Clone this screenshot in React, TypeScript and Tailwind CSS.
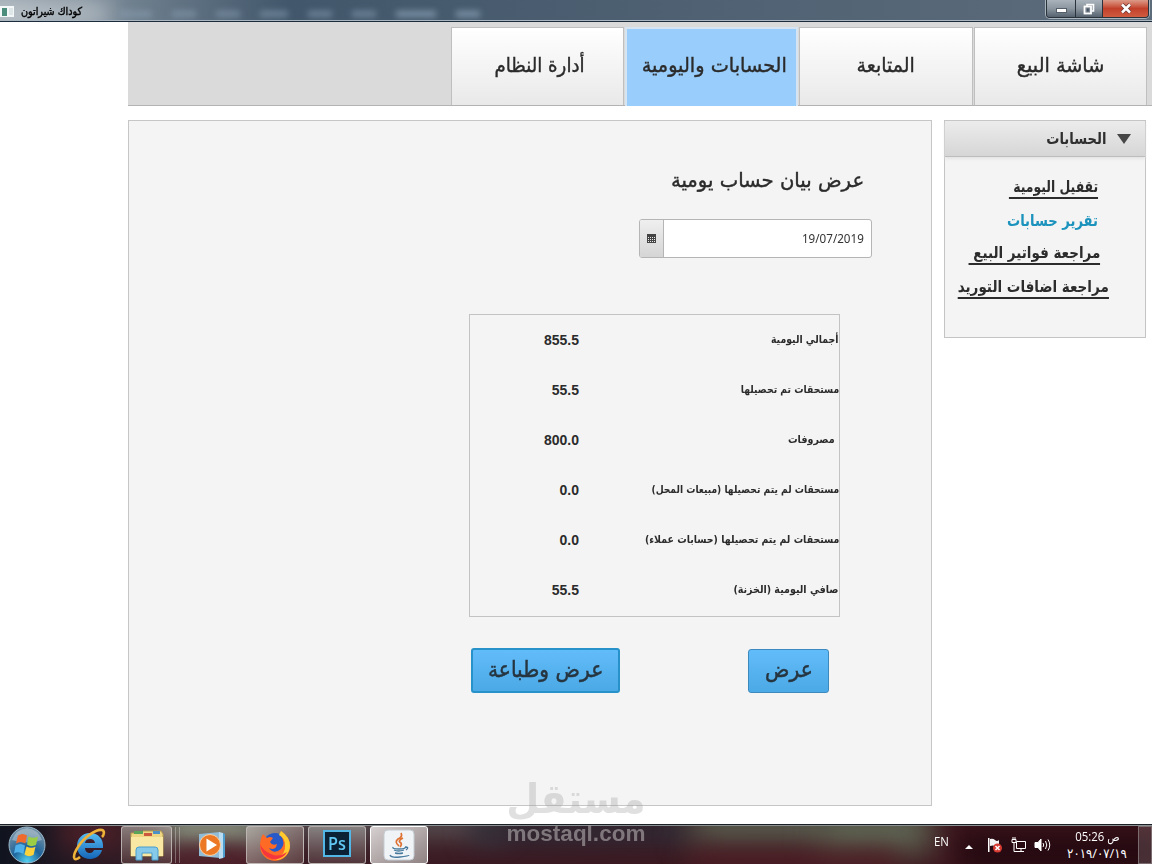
import { ReactNode } from 'react';

interface Tab {
  label: string;
  active?: boolean;
  scale: string;
}

interface Row {
  label: string;
  value: string;
  scale: string;
}

const tabs: Tab[] = [
  { label: 'شاشة البيع', scale: 'scale-x-[0.96]' },
  { label: 'المتابعة', scale: 'scale-x-[0.95]' },
  { label: 'الحسابات واليومية', scale: 'ml-[5px] scale-x-[0.965]', active: true },
  { label: 'أدارة النظام', scale: 'ml-[4px] scale-x-[0.91]' },
];

const rows: Row[] = [
  { label: 'أجمالي اليومية', value: '855.5', scale: 'scale-x-[0.85]' },
  { label: 'مستحقات تم تحصيلها', value: '55.5', scale: 'scale-x-[0.84]' },
  { label: 'مصروفات', value: '800.0', scale: 'scale-x-[0.87] mr-1' },
  { label: 'مستحقات لم يتم تحصيلها (مبيعات المحل)', value: '0.0', scale: 'scale-x-[0.83]' },
  { label: 'مستحقات لم يتم تحصيلها (حسابات عملاء)', value: '0.0', scale: 'scale-x-[0.855]' },
  { label: 'صافي اليومية (الخزنة)', value: '55.5', scale: 'scale-x-[0.865]' },
];

function TitleBar() {
  return (
    <div
      dir="ltr"
      className="relative flex h-[22px] shrink-0 items-start justify-between overflow-hidden border-b border-[#1d2c3c] bg-linear-to-r from-[#98a4ad] via-[#42576b] via-25% to-[#5d6c7b]"
    >
      <div className="absolute -left-4 top-1 h-5 w-32 rounded-full bg-white/50 blur-md" />
      <div className="absolute left-[120px] top-[11px] flex gap-5 blur-[3px]">
        <div className="h-1.5 w-8 bg-[#8aa0b4]/60" />
        <div className="h-1.5 w-6 bg-[#8aa0b4]/60" />
        <div className="h-1.5 w-6 bg-[#8aa0b4]/60" />
        <div className="h-1.5 w-7 bg-[#8aa0b4]/60" />
        <div className="h-1.5 w-6 bg-[#8aa0b4]/60" />
        <div className="h-1.5 w-6 bg-[#8aa0b4]/60" />
        <div className="h-1.5 w-10 bg-[#8aa0b4]/80" />
        <div className="h-1.5 w-6 bg-[#8aa0b4]/80" />
      </div>
      <div className="absolute inset-x-0 bottom-0 h-px bg-[#a9b5bf]" />
      <div className="relative flex items-center pt-[4px]">
        <svg width="15" height="13" viewBox="0 0 15 13">
          <rect x="0" y="1" width="14" height="11" fill="#f4f7f7" />
          <rect x="2" y="3" width="5" height="8" fill="#4c8c7c" />
          <rect x="9" y="3" width="4" height="7" fill="#dfe6e8" />
        </svg>
        <span className="ml-1.5 mt-px origin-left scale-x-[0.97] whitespace-nowrap font-['DejaVu_Sans_Condensed','DejaVu_Sans',sans-serif] text-[11px] leading-[14px] text-black [-webkit-text-stroke:0.4px_black]">
          كوداك شيراتون
        </span>
      </div>
      <div className="relative mr-[3px] flex h-[18px] overflow-hidden rounded-b border border-t-0 border-[#2a333c] shadow-[0_0_0_1px_#aab4bd]">
        <div className="flex w-[29px] items-center justify-center border-r border-[#2a333c] bg-linear-to-b from-[#aab3bb] via-[#8b96a0] to-[#56636f]">
          <div className="mt-1 h-[5px] w-[11px] border border-[#555f69] bg-white" />
        </div>
        <div className="flex w-[27px] items-center justify-center border-r border-[#2a333c] bg-linear-to-b from-[#aab3bb] via-[#8b96a0] to-[#56636f]">
          <svg width="12" height="12" viewBox="0 0 12 12" fill="none">
            <path d="M4 3V1.500H10.500V8H9" stroke="#fff" strokeWidth="1.600" />
            <rect x="1.500" y="3.500" width="6.500" height="7" fill="#7d8994" stroke="#fff" strokeWidth="1.800" />
            <rect x="3.800" y="5.500" width="2" height="3" fill="#46525e" />
          </svg>
        </div>
        <div className="flex w-[45px] items-center justify-center bg-linear-to-b from-[#dc9a88] via-[#c2402a] to-[#cf5b3f]">
          <svg width="12" height="11" viewBox="0 0 12 11">
            <path d="M2 1.500L10 9.500M10 1.500L2 9.500" stroke="#6c3a35" strokeWidth="4" />
            <path d="M2 1.500L10 9.500M10 1.500L2 9.500" stroke="#fff" strokeWidth="2.500" />
          </svg>
        </div>
      </div>
    </div>
  );
}

function Tabs() {
  return (
    <div className="ml-32 flex h-[84px] shrink-0 border-b border-[#b3b3b3] bg-[#dadada] pr-[5px] pt-[5px]">
      {tabs.map((tab) => (
        <div
          key={tab.label}
          className={`ml-[1px] flex w-[173.3px] shrink-0 justify-center border border-b-0 text-[#2b2b2b] ${
            tab.active
              ? 'h-[79px] border-2 border-b-0 border-[#d5e4f0] bg-[#99cdfb] pt-[20px]'
              : 'h-[78px] border-[#bfbfbf] bg-linear-to-b from-white to-[#e9e9e9] pt-[21px]'
          }`}
        >
          <span
            className={`whitespace-nowrap text-[20px] leading-8 [-webkit-text-stroke:0.4px_#2b2b2b] ${tab.scale}`}
          >
            {tab.label}
          </span>
        </div>
      ))}
    </div>
  );
}

function SideLink({ children, className = '' }: { children: ReactNode; className?: string }) {
  return (
    <div className={`w-fit origin-right whitespace-pre text-[16px] font-bold leading-5 ${className}`}>{children}</div>
  );
}

function Sidebar() {
  return (
    <div className="h-[218px] w-[202px] shrink-0 border border-[#c4c4c4] bg-[#f4f4f4]">
      <div className="flex h-9 items-center border-b border-[#bdbdbd] bg-linear-to-b from-[#ececec] to-[#d6d6d6] pr-[14px] shadow-[0_2px_3px_#e4e4e4]">
        <svg width="14" height="10" viewBox="0 0 14 10">
          <path d="M0 0H14L7 10Z" fill="#474747" />
        </svg>
        <span className="mr-[11px] origin-right scale-x-[0.82] text-[16px] font-bold text-[#2f2f2f]">الحسابات</span>
      </div>
      <div className="text-[#2c2c2c]">
        <SideLink className="mr-[47px] mt-5 scale-x-[0.775] border-b-2 border-[#2c2c2c]">{'تقفيل اليومية '}</SideLink>
        <SideLink className="mr-[47px] mt-3 scale-x-[0.82] text-[#1c93bd]">تقرير حسابات</SideLink>
        <SideLink className="mr-[45px] mt-3 scale-x-[0.843] border-b-2 border-[#2c2c2c]">
          {'مراجعة فواتير البيع '}
        </SideLink>
        <SideLink className="mr-[36px] mt-3 scale-x-[0.845] border-b-2 border-[#2c2c2c]">مراجعة اضافات التوريد</SideLink>
      </div>
    </div>
  );
}

function DateField() {
  return (
    <div dir="ltr" className="flex h-[39px] w-[233px] overflow-hidden rounded-[3px] border border-[#b5b5b5] bg-white">
      <div className="flex w-6 items-center justify-center border-r border-[#b5b5b5] bg-linear-to-b from-[#efefef] to-[#d5d5d5]">
        <svg width="9" height="9" viewBox="0 0 9 9">
          <path d="M0 0H9V9H0Z" fill="#444" />
          <path d="M1 3h1v1H1zM3 3h1v1H3zM5 3h1v1H5zM7 3h1v1H7zM1 5h1v1H1zM3 5h1v1H3zM5 5h1v1H5zM7 5h1v1H7zM1 7h1v1H1zM3 7h1v1H3zM5 7h1v1H5zM7 7h1v1H7z" fill="#e8e8e8" />
        </svg>
      </div>
      <div className="flex flex-1 items-center justify-end pr-[7px] font-['Noto_Sans',sans-serif] text-[12px] text-[#333]">
        <span className="origin-right scale-x-[0.97]">19/07/2019</span>
      </div>
    </div>
  );
}

function Summary() {
  return (
    <div className="flex h-[303px] w-[371px] flex-col border border-[#c3c3c3] text-[#2b2b2b]">
      {rows.map((row) => (
        <div key={row.label} className="flex h-[50px] shrink-0 items-center">
          <div className="flex w-[260px] pt-px">
            <span className={`origin-right whitespace-nowrap text-[11px] font-bold ${row.scale}`}>{row.label}</span>
          </div>
          <span dir="ltr" className="font-['Liberation_Sans',sans-serif] text-[14px] font-bold">
            {row.value}
          </span>
        </div>
      ))}
    </div>
  );
}

function TaskButton({ children, className = '' }: { children: ReactNode; className?: string }) {
  return (
    <div
      className={`flex h-[38px] items-center justify-center rounded-[3px] border border-[#c9c4c2]/80 ${className}`}
    >
      {children}
    </div>
  );
}

function TaskbarGlass() {
  return (
    <div className="absolute inset-0 overflow-hidden bg-linear-to-r from-[#10141f] via-[#3a1d26] via-15% to-[#3d131b]">
      <div className="absolute -top-2 left-[60px] h-8 w-16 bg-[#4d2028] blur-md" />
      <div className="absolute -top-3 left-[165px] h-8 w-28 bg-[#8f9c88] blur-md" />
      <div className="absolute -bottom-2 left-[170px] h-6 w-24 bg-[#54202a] blur-md" />
      <div className="absolute -top-3 left-[250px] h-6 w-64 bg-[#595557] blur-md" />
      <div className="absolute -top-2 left-[470px] h-7 w-56 bg-[#2f2a35] blur-md" />
      <div className="absolute -top-5 left-[690px] h-10 w-36 bg-[#5a6152] blur-lg" />
      <div className="absolute -top-4 left-[820px] h-11 w-28 bg-[#616c58] blur-lg" />
      <div className="absolute -bottom-2 left-[690px] h-5 w-52 bg-[#4f1b23] blur-md" />
      <div className="absolute -right-4 top-2 h-10 w-52 bg-[#250a11] blur-md" />
    </div>
  );
}

function Taskbar() {
  return (
    <div
      dir="ltr"
      className="relative h-10 shrink-0 overflow-hidden border-t border-[#1b2026] font-['Open_Sans','DejaVu_Sans_Condensed',sans-serif] text-white"
    >
      <TaskbarGlass />
      <div className="relative flex h-full items-center justify-between border-t border-[#8a9090]">
        <div className="flex items-center">
          <svg className="ml-2" width="38" height="38" viewBox="0 0 38 38">
            <defs>
              <radialGradient id="orb" cx="50%" cy="95%" r="80%">
                <stop offset="0" stopColor="#53d0f0" />
                <stop offset=".5" stopColor="#1d639b" />
                <stop offset="1" stopColor="#6a8ba3" />
              </radialGradient>
            </defs>
            <circle cx="19" cy="19" r="18" fill="url(#orb)" stroke="#9cb9ca" />
            <path d="M4 14Q8 3 19 2Q30 3 34 14Q19 19 4 14Z" fill="#fff" opacity=".3" />
            <path d="M10 9.500Q14.500 6.500 19 9.500L17.300 17.500Q12.500 14.500 8 17.500Z" fill="#ef6a2c" />
            <path d="M20.500 10.500Q25.500 13 30 10.500L28 19Q23 21.500 19 18.500Z" fill="#9cce45" />
            <path d="M7.500 19.500Q12.500 16.500 17 19.500L15.300 28Q10.500 25 6 27.500Z" fill="#4fb1ec" />
            <path d="M18.500 20.500Q23 23 27.500 20.800L25.500 29Q20.500 31.500 16.500 28.500Z" fill="#fbd13c" />
          </svg>
          <svg className="ml-[26px]" width="34" height="34" viewBox="0 0 34 34">
            <defs>
              <linearGradient id="ie" x1="0" y1="0" x2="0" y2="1">
                <stop offset="0" stopColor="#56bdf2" />
                <stop offset="1" stopColor="#1566b8" />
              </linearGradient>
            </defs>
            <path
              fillRule="evenodd"
              d="M18 5C10 5 5 11 5 18C5 26 11 31 18 31C24 31 29 27 30 22H22C21 24 20 25 18 25C15 25 13 23 13 20H31C32 11 26 5 18 5ZM13 15C13.500 12.500 15 11 18 11C21 11 22.500 12.500 23 15Z"
              fill="url(#ie)"
            />
            <path
              d="M8 29C1 35 0 28 6 19C12 9 24 1 30 2C33 3 32 7 30 9"
              fill="none"
              stroke="#eeb238"
              strokeWidth="2.600"
            />
          </svg>
          <TaskButton className="ml-[15px] w-[51px] bg-linear-to-b from-[#aaa49f]/70 to-[#5c3f42]/70">
            <svg width="34" height="32" viewBox="0 0 34 32">
              <path d="M1 4H11L13 2H31L33 5V27H1Z" fill="#eed682" stroke="#b79d50" />
              <path d="M4 2H13V5H4Z" fill="#5da45b" />
              <path d="M14 4H22V7H14Z" fill="#cc573e" />
              <path d="M23 2H30V5H23Z" fill="#4d91c7" />
              <path d="M1 8H33V27H1Z" fill="#f8e8a4" />
              <path d="M6 31V21Q6 18 9 18H25Q28 18 28 21V31H22V24H12V31Z" fill="#86c9e9" stroke="#4a9dcc" />
            </svg>
          </TaskButton>
          <div className="ml-[3px] h-9 w-[5px] border-x border-white/30" />
          <svg className="ml-[18px]" width="28" height="28" viewBox="0 0 28 28">
            <path d="M1 3L22 1V27L1 25Z" fill="#91bcd8" />
            <path d="M21 1L25 2V27L21 28Z" fill="#b9dcf0" />
            <path d="M25 2L27 3V26L25 27Z" fill="#4e9dcf" />
            <circle cx="12" cy="14" r="10.500" fill="#ec7826" stroke="#fbd0a4" />
            <path d="M8.500 7.500L19 14L8.500 20.500Z" fill="#fff" />
          </svg>
          <TaskButton className="ml-5 w-[58px] bg-linear-to-br from-[#b5b0aa]/80 to-[#6b4d4e]/70">
            <svg width="32" height="32" viewBox="0 0 32 32">
              <circle cx="16" cy="16" r="12" fill="#2759c9" />
              <path d="M4 5L8 9Q11 7 14 9L11 13Q13 17 18 15Q17 22 10 19Q15 26 22 20Q27 14 22 7L22 2Q31 8 31 17A15 15 0 0 1 1 17Q1 10 4 5Z" fill="#ff6a25" />
              <path d="M22 2Q31 8 31 17A15 15 0 0 1 17 31Q27 25 26 16Q26 9 20 6Z" fill="#ffcb2e" />
              <path d="M1 15Q2 27 13 30Q24 31 28 23Q20 29 12 25Q4 22 1 15Z" fill="#f5363f" />
            </svg>
          </TaskButton>
          <TaskButton className="ml-1 w-[58px] bg-linear-to-b from-[#9d9a99]/70 to-[#5b4246]/70">
            <div className="mb-1 flex h-[27px] w-7 items-center justify-center border-2 border-[#52b7e6] bg-[#0b2236] font-['Open_Sans',sans-serif] text-[18px] font-semibold leading-none text-[#61c7f3]">
              <span className="scale-x-[0.9]">Ps</span>
            </div>
          </TaskButton>
          <TaskButton className="ml-1 w-[58px] border-white bg-linear-to-br from-[#d6d0d0] to-[#8f8283]">
            <svg width="32" height="32" viewBox="0 0 32 32" fill="none">
              <rect x="1" y="1" width="30" height="30" rx="4" fill="#f1f4f7" stroke="#c4ccd3" />
              <path d="M18 4Q20 8 15 10Q11 13 16 17M20 9Q14 12 18 14Q19 16 17 18" stroke="#df7132" strokeWidth="1.700" />
              <path d="M10 18Q9 20 16 20T22 18M11 21Q15 23 21 21M12 24Q16 25 20 24M7 26Q8 29 17 28T26 26M22 18Q27 18 23 21" stroke="#47799d" strokeWidth="1.300" />
            </svg>
          </TaskButton>
        </div>
        <div className="flex h-full items-center">
          <span className="mb-1.5 w-4 origin-left scale-x-[0.95] text-[12px] leading-none">EN</span>
          <svg className="ml-[15px] mt-1" width="8" height="4" viewBox="0 0 8 4">
            <path d="M4 0L8 4H0Z" fill="#fff" />
          </svg>
          <svg className="ml-[14px]" width="16" height="16" viewBox="0 0 16 16">
            <path d="M1 1H2.500V15H1Z" fill="#fff" />
            <path d="M3 2Q6 1 8 3T12 3V9Q10 10 8 9T3 9Z" fill="#f3f3f3" />
            <circle cx="10.500" cy="11" r="4.500" fill="#d63a31" />
            <path d="M8.500 9L12.500 13M12.500 9L8.500 13" stroke="#fff" strokeWidth="1.500" />
          </svg>
          <svg className="ml-2" width="16" height="16" viewBox="0 0 16 16" fill="none" stroke="#fff">
            <path d="M5.500 4.500H14.500V11.500H5.500ZM10 12V14M6 14.500H13M1 2.500H5V5.500H1ZM2 0V2M4 0V2M3 6V14.500H6" />
          </svg>
          <svg className="ml-[7px]" width="17" height="16" viewBox="0 0 17 16" fill="none" stroke="#fff">
            <path d="M1 5.500H4L7 2V14L4 10.500H1Z" fill="#fff" />
            <path d="M9 6Q10.500 8 9 10M11.500 4Q14 8 11.500 12M14 2.500Q17.500 8 14 13.500" />
          </svg>
          <div className="ml-[16px] flex w-[60px] flex-col items-center text-[12px] leading-[17px]">
            <span className="ml-[1px] scale-x-[0.95] whitespace-nowrap tracking-tight">05:26 ص</span>
            <span className="whitespace-nowrap text-[13px]">٢٠١٩/٠٧/١٩</span>
          </div>
          <div className="ml-[11px] h-full w-[14px] border border-[#8f8587]/70 bg-white/15" />
        </div>
      </div>
    </div>
  );
}

function Watermark() {
  return (
    <div dir="ltr" className="absolute left-[507px] top-[778px] flex w-[138px] flex-col font-bold">
      <div className="flex h-[42px] items-center justify-center whitespace-nowrap text-[41px] leading-[42px] text-[#9b9b9b] opacity-30">
        <span className="scale-x-[0.93]">مستقل</span>
      </div>
      <div className="mt-1 flex h-[20px] items-center justify-center font-['Liberation_Sans',sans-serif] text-[22.500px] leading-5 text-[#a09a9c] opacity-70">
        <span>mostaql.com</span>
      </div>
    </div>
  );
}

export default function App() {
  return (
    <div
      dir="rtl"
      className="relative flex h-[864px] w-[1152px] flex-col overflow-hidden bg-white font-['DejaVu_Sans',sans-serif]"
    >
      <TitleBar />
      <Tabs />
      <div className="flex flex-1 items-start pr-[6px] pt-[14px]">
        <Sidebar />
        <main className="mr-3 flex h-[686px] w-[804px] flex-col items-start border border-[#c6c6c6] bg-[#f4f4f4]">
          <h1 className="mr-[67px] mt-[43px] h-8 origin-right scale-x-[0.98] whitespace-nowrap text-[20px] leading-8 text-[#2b2b2b] [-webkit-text-stroke:0.4px_#2b2b2b]">
            عرض بيان حساب يومية
          </h1>
          <div className="mr-[59px] mt-[23px]">
            <DateField />
          </div>
          <div className="mr-[91px] mt-14">
            <Summary />
          </div>
          <div className="mr-[102px] mt-[31px] flex items-center text-[22px] text-[#263540] [-webkit-text-stroke:0.5px_#263540]">
            <button className="flex h-11 w-[81px] items-center justify-center rounded-[3px] border border-[#3b89bd] bg-linear-to-b from-[#62bcf9] to-[#4ba9e6] pb-0.5">
              <span className="scale-x-[0.92] whitespace-nowrap">عرض</span>
            </button>
            <button className="mr-[128px] flex h-[45px] w-[149px] items-center justify-center rounded-[3px] border-2 border-[#2792c9] bg-linear-to-b from-[#62bcf9] to-[#4ba9e6] pb-0.5">
              <span className="scale-x-[0.92] whitespace-nowrap">عرض وطباعة</span>
            </button>
          </div>
        </main>
      </div>
      <Taskbar />
      <Watermark />
    </div>
  );
}
